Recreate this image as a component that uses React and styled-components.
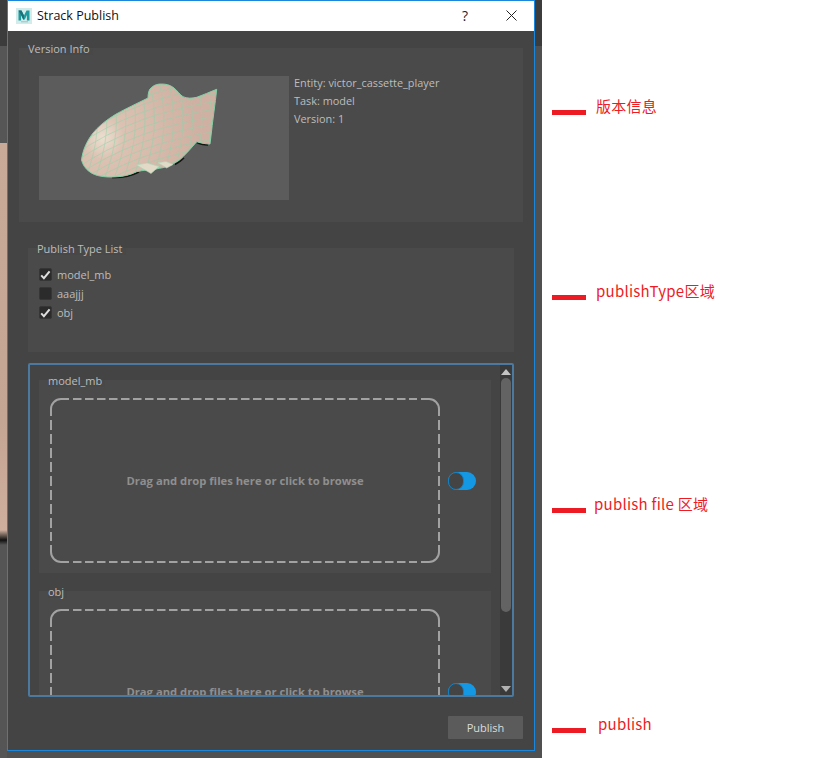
import React from 'react';
import styled, { createGlobalStyle } from 'styled-components';

const UI_FONT = '"Open Sans", "Noto Sans", sans-serif';

const GlobalStyle = createGlobalStyle`
    html, body {
        margin: 0;
        padding: 0;
        background: #fff;
    }
`;

const Page = styled.div`
    display: flex;
    width: 818px;
    height: 758px;
    overflow: hidden;
`;

const Stage = styled.div`
    width: 535px;
    height: 758px;
    padding-left: 7px;
    box-sizing: border-box;
    flex: none;
    background:
        linear-gradient(#3c3c3c 0 46px, #565656 46px 143px, #c9a997 143px, #c4a493 420px, #cfae9e 530px, #111 540px, #555 545px) no-repeat 0 0 / 7px 100%,
        #505050;
`;

const RightEdge = styled.div`
    width: 7px;
    height: 758px;
    flex: none;
    background: linear-gradient(#3c3c3c 0 46px, #505050 46px);
`;

const Window = styled.div`
    width: 528px;
    height: 751px;
    box-sizing: border-box;
    border: 1px solid #1a87dd;
    background: #444;
    display: flex;
    flex-direction: column;
    font-family: ${UI_FONT};
`;

const TitleBar = styled.div`
    height: 30px;
    flex: none;
    background: #fff;
    display: flex;
    align-items: center;
    padding-left: 8px;
    color: #111;
    font-size: 12.5px;
`;

const TitleText = styled.span`
    margin: -2px 0 0 5px;
    flex: 1;
`;

const TitleButton = styled.button`
    width: 46px;
    height: 30px;
    margin-top: -2px;
    border: 0;
    padding: 0;
    background: none;
    display: flex;
    align-items: center;
    justify-content: center;
    color: #222;
    font-family: inherit;
    font-size: 14px;
`;

const Body = styled.div`
    flex: 1;
    display: flex;
    flex-direction: column;
    padding-top: 17px;
`;

const Group = styled.section`
    box-sizing: border-box;
    flex: none;
    height: ${p => p.$height}px;
    margin: ${p => p.$margin};
    background: #4a4a4a;
`;

const GroupTitle = styled.div`
    width: fit-content;
    height: 13px;
    line-height: 13px;
    margin: 0 0 -6px ${p => p.$left || 9}px;
    position: relative;
    top: -6px;
    padding: 0 3px 0 0;
    color: #bdbdbd;
    font-size: 11px;
    background: linear-gradient(transparent 50%, #484848 50%);
`;

const InfoRow = styled.div`
    display: flex;
    padding: 21px 0 0 20px;
`;

const Preview = styled.div`
    width: 250px;
    height: 124px;
    background: #5c5c5c;
    flex: none;
`;

const InfoList = styled.div`
    margin: -2px 0 0 5px;
    color: #bdbdbd;
    font-size: 10.9px;
    line-height: 18px;
`;

const TypeList = styled.div`
    padding: 13px 0 0 11px;
    display: flex;
    flex-direction: column;
    gap: 6px;
`;

const TypeRow = styled.label`
    display: flex;
    align-items: center;
    gap: 5px;
    height: 13px;
    color: #bdbdbd;
    font-size: 11px;
`;

const CheckBox = styled.span`
    width: 13px;
    height: 13px;
    box-sizing: border-box;
    border: 1px solid #363636;
    border-radius: 2px;
    background: #2b2b2b;
    display: flex;
    align-items: center;
    justify-content: center;
`;

const ScrollFrame = styled.div`
    flex: none;
    height: 334px;
    margin: 11px 20px 0;
    box-sizing: border-box;
    border: 2px solid #4b799f;
    border-radius: 2px;
    display: flex;
    overflow: hidden;
    background: #444;
`;

const ScrollContent = styled.div`
    width: 470px;
    flex: none;
    overflow: hidden;
    box-sizing: border-box;
    padding: 15px 9px 0;
`;

const FileGroup = styled.section`
    height: 193px;
    margin-bottom: 18px;
    background: #4a4a4a;
    padding: 0 0 0 11px;
    box-sizing: border-box;
`;

const FileRow = styled.div`
    display: flex;
    align-items: center;
    gap: 8px;
    margin-top: 11px;
`;

const DropZone = styled.div`
    position: relative;
    width: 390px;
    height: 165px;
    flex: none;
    display: flex;
    align-items: center;
    justify-content: center;
    color: #8f8f8f;
    font-size: 11.25px;
    font-weight: 700;
`;

const DashedOutline = styled.svg`
    position: absolute;
    inset: 0;
    fill: none;
    stroke: #a2a2a2;
    stroke-width: 2;
`;

const Toggle = styled.div`
    position: relative;
    width: 28px;
    height: 18px;
    flex: none;
    border-radius: 9px;
    background: #1598e4;
`;

const ToggleKnob = styled.span`
    position: absolute;
    left: 0;
    top: 0;
    width: 16px;
    height: 18px;
    box-sizing: border-box;
    border: 1px solid #1481c2;
    border-radius: 9px;
    background: #444;
`;

const ScrollBar = styled.div`
    width: 12px;
    flex: none;
    margin-left: auto;
    background: #3a3a3a;
    display: flex;
    flex-direction: column;
`;

const ScrollArrow = styled.div`
    height: 13px;
    flex: none;
    display: flex;
    align-items: center;
    justify-content: center;
    margin-top: ${p => (p.$bottom ? 'auto' : '0')};
`;

const ScrollThumb = styled.div`
    height: 234px;
    margin: 0 1px;
    border-radius: 5px;
    background: #636363;
`;

const Footer = styled.div`
    display: flex;
    justify-content: flex-end;
    padding: 19px 11px 0 0;
`;

const PublishButton = styled.button`
    width: 75px;
    height: 23px;
    border: 0;
    border-radius: 1px;
    padding: 0;
    background: #5b5b5b;
    color: #dcdcdc;
    font-family: inherit;
    font-size: 11px;
`;

const Notes = styled.div`
    flex: 1;
    display: flex;
    flex-direction: column;
    padding: 95px 0 0 10px;
    font-family: "Noto Sans CJK SC", "Noto Sans", sans-serif;
`;

const Note = styled.div`
    display: flex;
    height: 20px;
    align-items: center;
    margin-top: ${p => p.$top || 0}px;
`;

const NoteBar = styled.span`
    width: 34px;
    height: 5px;
    margin-top: 15px;
    flex: none;
    background: #ed1c24;
`;

const NoteText = styled.span`
    margin-left: ${p => p.$left}px;
    color: #ed1c24;
    font-size: 15px;
    letter-spacing: 0.25px;
    white-space: nowrap;
`;

const MayaIcon = () => (
    <svg width="16" height="16" viewBox="0 0 16 16">
        <rect width="16" height="16" fill="#d3ebea" />
        <path d="M2.5 12.5V2.5h3L8 7.5l2.5-5h3v10h-2.6V7L8.8 11.5H7.2L5.1 7v5.5z" fill="#1f9a9e" />
        <path d="M2.5 2.5h3L8 7.5v4h-.8L5.1 7 2.5 2.5z" fill="#1d6f78" />
        <rect x="5" y="13.3" width="7" height="1" fill="#8fc5c6" />
    </svg>
);

const CloseIcon = () => (
    <svg width="11" height="11" viewBox="0 0 11 11">
        <path d="M.5.5l10 10M10.5.5l-10 10" stroke="#222" strokeWidth="1" fill="none" />
    </svg>
);

const CheckMark = () => (
    <svg width="11" height="10" viewBox="0 0 11 10">
        <path d="M1.2 5.4l2.7 2.8L9.6 1.4" stroke="#dedede" strokeWidth="2" fill="none" />
    </svg>
);

const BODY = 'M81.5 160C83 149 87 141 93 133C98 127 104 122 110 118C117 113 124 110 131.7 106L148 98C148 93 149 89 151.7 87.3C155 84.5 158 84 161.7 84C166 84 170 85 173 87.3C177 90 180 95 183 96.7C187 98.5 192 98.5 196.7 97.3C203 95 210 92 216.7 89.3C215 105 213 118 211.7 130L210 144C205 144 201 143 196.7 141.7C192 147 188 152 183 156.7C180 160 176 162 173 164C165 168 160 168 156 169C150 170 143 170 136.7 171.7C130 175 123 176.5 116.7 176.8C110 177.3 105 177 100 176C93 175 84 170 81.5 160Z';

// grid of the mesh on the body, bent a little so that it follows the form
const ribs = Array.from({ length: 14 }, (_, i) => {
    const x = 92 + i * 9.5;
    return `M${x} 80Q${x + 14} 130 ${x - 8} 182`;
});
const rings = Array.from({ length: 11 }, (_, i) => {
    const y = 124 + i * 7.5;
    return `M75 ${y + 8}Q135 ${y - 34} 222 ${y - 46}`;
});

const FishPreview = () => (
    <svg width="250" height="124" viewBox="39 76 250 124">
        <defs>
            <radialGradient id="skin" gradientUnits="userSpaceOnUse" cx="103" cy="138" r="95">
                <stop offset="0" stopColor="#ecdfd0" />
                <stop offset="0.22" stopColor="#dcc2b2" />
                <stop offset="1" stopColor="#d0b0a2" />
            </radialGradient>
            <filter id="soft" x="-5%" y="-5%" width="110%" height="110%">
                <feGaussianBlur stdDeviation="0.35" />
            </filter>
            <clipPath id="body">
                <path d={BODY} />
            </clipPath>
        </defs>
        <g filter="url(#soft)">
            <path d="M112 177.5C122 178 131 176 139 172M175 164.5C178 163 181 161 184 158M197 142.5C200 144 203 144.6 208 145" stroke="#15130f" strokeWidth="1.4" fill="none" />
            <path d={BODY} fill="url(#skin)" stroke="#84cfa6" strokeWidth="1" />
            <g clipPath="url(#body)" fill="none" stroke="#92d2aa" strokeWidth="0.7" opacity="0.75">
                {ribs.map(d => <path key={d} d={d} />)}
                {rings.map(d => <path key={d} d={d} />)}
            </g>
            <path d="M136.7 165L151 173.5L159 166.5L147 163Z" fill="#e2dac6" stroke="#a9d8b8" strokeWidth="0.6" />
            <path d="M158 162.7L166.7 168L173 164.5L166 161.5Z" fill="#e2dac6" stroke="#a9d8b8" strokeWidth="0.6" />
        </g>
    </svg>
);

const DropArea = () => (
    <DropZone>
        <DashedOutline width="390" height="165">
            <path d="M1 18V11a10 10 0 0 1 10-10h8M371 1h8a10 10 0 0 1 10 10v7M389 147v7a10 10 0 0 1-10 10h-8M19 164h-8a10 10 0 0 1-10-10v-7" />
            <path d="M23 1H367M23 164H367" strokeDasharray="8.5 3.5" />
            <path d="M1 22V143M389 22V143" strokeDasharray="10 4" />
        </DashedOutline>
        Drag and drop files here or click to browse
    </DropZone>
);

const publishTypes = [
    { name: 'model_mb', checked: true },
    { name: 'aaajjj', checked: false },
    { name: 'obj', checked: true },
];

const notes = [
    { text: '版本信息', left: 10, top: 0 },
    { text: 'publishType区域', left: 10, top: 165 },
    { text: 'publish file 区域', left: 8, top: 193 },
    { text: 'publish', left: 12, top: 200 },
];

const App = () => (
    <Page>
        <GlobalStyle />
        <Stage>
            <Window>
                <TitleBar>
                    <MayaIcon />
                    <TitleText>Strack Publish</TitleText>
                    <TitleButton>?</TitleButton>
                    <TitleButton><CloseIcon /></TitleButton>
                </TitleBar>
                <Body>
                    <Group $height={174} $margin="0 11px">
                        <GroupTitle>Version Info</GroupTitle>
                        <InfoRow>
                            <Preview><FishPreview /></Preview>
                            <InfoList>
                                <div>Entity: victor_cassette_player</div>
                                <div>Task: model</div>
                                <div>Version: 1</div>
                            </InfoList>
                        </InfoRow>
                    </Group>
                    <Group $height={104} $margin="26px 20px 0">
                        <GroupTitle>Publish Type List</GroupTitle>
                        <TypeList>
                            {publishTypes.map(type => (
                                <TypeRow key={type.name}>
                                    <CheckBox>{type.checked && <CheckMark />}</CheckBox>
                                    {type.name}
                                </TypeRow>
                            ))}
                        </TypeList>
                    </Group>
                    <ScrollFrame>
                        <ScrollContent>
                            {['model_mb', 'obj'].map(name => (
                                <FileGroup key={name}>
                                    <GroupTitle $left={-2}>{name}</GroupTitle>
                                    <FileRow>
                                        <DropArea />
                                        <Toggle><ToggleKnob /></Toggle>
                                    </FileRow>
                                </FileGroup>
                            ))}
                        </ScrollContent>
                        <ScrollBar>
                            <ScrollArrow>
                                <svg width="10" height="6" viewBox="0 0 10 6"><path d="M5 0l5 6H0z" fill="#c4c4c4" /></svg>
                            </ScrollArrow>
                            <ScrollThumb />
                            <ScrollArrow $bottom>
                                <svg width="10" height="6" viewBox="0 0 10 6"><path d="M0 0h10L5 6z" fill="#b0b0b0" /></svg>
                            </ScrollArrow>
                        </ScrollBar>
                    </ScrollFrame>
                    <Footer>
                        <PublishButton>Publish</PublishButton>
                    </Footer>
                </Body>
            </Window>
        </Stage>
        <RightEdge />
        <Notes>
            {notes.map(note => (
                <Note key={note.text} $top={note.top}>
                    <NoteBar />
                    <NoteText $left={note.left}>{note.text}</NoteText>
                </Note>
            ))}
        </Notes>
    </Page>
);

export default App;
